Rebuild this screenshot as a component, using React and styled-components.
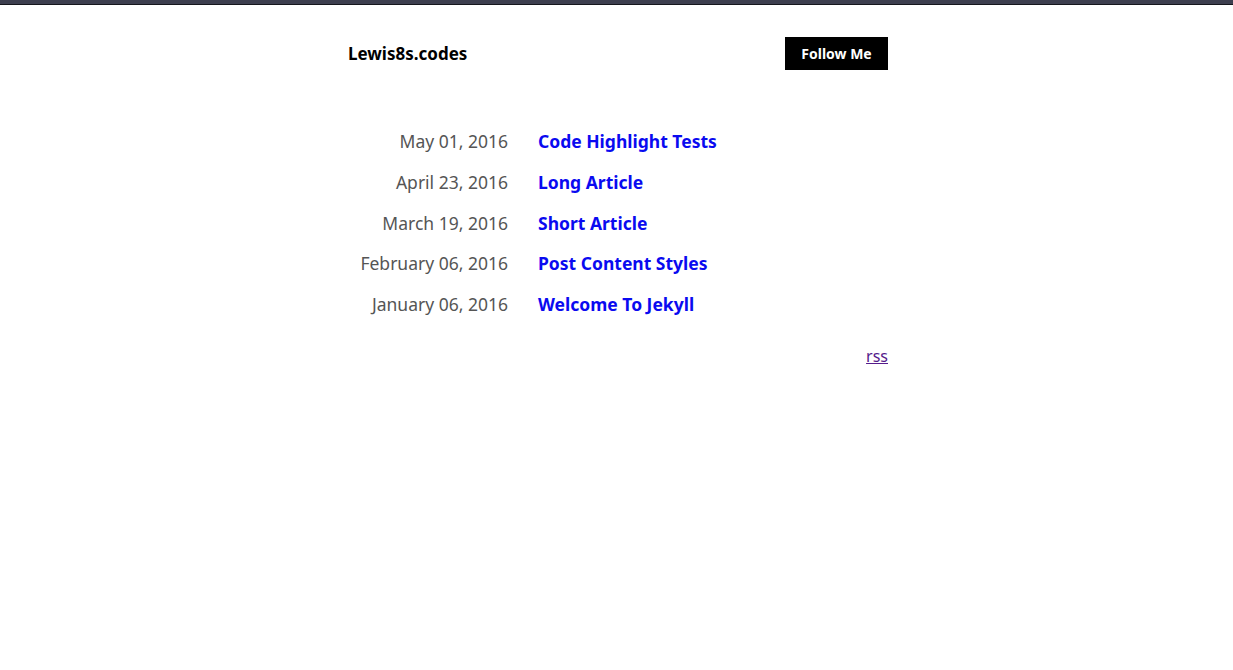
import React from "react";
import styled, { createGlobalStyle } from "styled-components";

const Global = createGlobalStyle`
  html, body { margin: 0; padding: 0; background: #fff; }
  body { font-family: "Noto Sans", "Open Sans", sans-serif; color: #000; }
`;

const TopBar = styled.div`
  height: 4px;
  background: #3d3f4f;
  border-bottom: 1px solid #16171d;
`;

const Container = styled.div`
  width: 540px;
  margin: 0 0 0 calc(50% - 268.5px);
`;

const Header = styled.header`
  display: flex;
  justify-content: space-between;
  align-items: center;
  padding-top: 32px;
`;

const Title = styled.a`
  font-size: 17px;
  font-weight: 700;
  color: #000;
  text-decoration: none;
`;

const FollowButton = styled.a`
  display: inline-flex;
  align-items: center;
  justify-content: center;
  width: 103px;
  height: 33px;
  background: #000;
  color: #fff;
  font-size: 14px;
  font-weight: 700;
  text-decoration: none;
`;

const PostList = styled.ul`
  list-style: none;
  margin: 59px 0 0;
  padding: 0;
  display: grid;
  grid-template-columns: 160px 1fr;
  column-gap: 30px;
  row-gap: 16.75px;
`;

const DateCell = styled.span`
  text-align: right;
  color: #555;
  font-size: 17.5px;
  line-height: 24px;
`;

const PostLink = styled.a`
  color: #0a0af0;
  font-size: 17.5px;
  font-weight: 700;
  line-height: 24px;
  text-decoration: none;
`;

const Footer = styled.div`
  display: flex;
  justify-content: flex-end;
  margin-top: 29px;
`;

const RssLink = styled.a`
  color: #551a8b;
  font-size: 16px;
  text-decoration: underline;
`;

const posts = [
  ["May 01, 2016", "Code Highlight Tests"],
  ["April 23, 2016", "Long Article"],
  ["March 19, 2016", "Short Article"],
  ["February 06, 2016", "Post Content Styles"],
  ["January 06, 2016", "Welcome To Jekyll"],
];

export default function App() {
  return (
    <>
      <Global />
      <TopBar />
      <Container>
        <Header>
          <Title href="#">Lewis8s.codes</Title>
          <FollowButton href="#">Follow Me</FollowButton>
        </Header>
        <PostList>
          {posts.map(([d, t]) => (
            <React.Fragment key={t}>
              <DateCell>{d}</DateCell>
              <PostLink href="#">{t}</PostLink>
            </React.Fragment>
          ))}
        </PostList>
        <Footer>
          <RssLink href="#">rss</RssLink>
        </Footer>
      </Container>
    </>
  );
}
